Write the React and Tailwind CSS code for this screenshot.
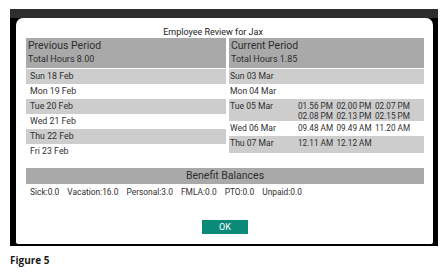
const prev = [
  { day: "Sun 18 Feb" },
  { day: "Mon 19 Feb" },
  { day: "Tue 20 Feb" },
  { day: "Wed 21 Feb" },
  { day: "Thu 22 Feb" },
  { day: "Fri 23 Feb" },
];

const curr = [
  { day: "Sun 03 Mar", times: [] },
  { day: "Mon 04 Mar", times: [] },
  { day: "Tue 05 Mar", times: ["01.56 PM", "02.00 PM", "02.07 PM", "02.08 PM", "02.13 PM", "02.15 PM"] },
  { day: "Wed 06 Mar", times: ["09.48 AM", "09.49 AM", "11.20 AM"] },
  { day: "Thu 07 Mar", times: ["12.11 AM", "12.12 AM"] },
];

const balances = ["Sick:0.0", "Vacation:16.0", "Personal:3.0", "FMLA:0.0", "PTO:0.0", "Unpaid:0.0"];

const PeriodHeader = ({ title, hours }) => (
  <div className="h-[30px] bg-[#a9a9a9] px-[2px] mb-px">
    <div className="text-[10.5px] leading-[14px] pt-[1px]">{title}</div>
    <div className="text-[9px] leading-[13px]">Total Hours {hours}</div>
  </div>
);

const App = () => {
  return (
    <div
      className="w-[448px] h-[272px] bg-white text-[#2f2f2f] pt-[9px] pl-[10px]"
      style={{ fontFamily: "Roboto, 'Liberation Sans', sans-serif" }}
    >
      {/* device frame */}
      <div className="w-[428px] h-[237px] flex flex-col bg-black">
        <div className="h-[9px] bg-[#2e2e2e]" />
        <div className="flex-1 pl-[6px] pr-[5px] pb-[2px] flex">
          <div className="flex-1 bg-white rounded-tl-[7px] rounded-tr-[7px] rounded-b-[2px] pt-[9px] pl-[10px] pr-[9px] flex flex-col">
            <div className="h-[11px] pr-[24px] text-[9px] leading-[11px] text-center text-[#222]">
              Employee Review for Jax
            </div>

            <div className="grid grid-cols-[200px_1fr] gap-[3px]">
              {/* previous period */}
              <div>
                <PeriodHeader title="Previous Period" hours="8.00" />
                {prev.map((r, i) => (
                  <div
                    key={r.day}
                    className={`h-[15px] pl-[4px] text-[8.8px] leading-[15px] ${i % 2 === 0 ? "bg-[#cdcdcd]" : ""}`}
                  >
                    {r.day}
                  </div>
                ))}
              </div>

              {/* current period */}
              <div>
                <PeriodHeader title="Current Period" hours="1.85" />
                {curr.map((r, i) => (
                  <div
                    key={r.day}
                    className={`flex pl-[1px] text-[8.6px] ${r.times.length > 3 ? "h-[22px] pt-[3px]" : i === 4 ? "h-[17px] pt-[3px]" : "h-[15px] pt-[3px]"} ${i % 2 === 0 ? "bg-[#cdcdcd]" : ""}`}
                  >
                    <div className="w-[68px] leading-[9px]">{r.day}</div>
                    <div className="grid grid-cols-[38.5px_38.5px_38.5px] leading-[9px] text-[8.2px]">
                      {r.times.map((t, j) => (
                        <div key={j}>{t}</div>
                      ))}
                    </div>
                  </div>
                ))}
              </div>
            </div>

            {/* benefit balances */}
            <div className="mt-[9px] h-[16px] bg-[#a9a9a9] text-center text-[10.5px] leading-[16px]">
              Benefit Balances
            </div>
            <div className="flex gap-[8px] pl-[4px] pt-[3px] text-[8.4px] leading-[11px]">
              {balances.map((b) => (
                <span key={b}>{b}</span>
              ))}
            </div>

            <div className="flex justify-center mt-[22px]">
              <button className="w-[46px] h-[14px] bg-[#0b8a78] text-white text-[9px] leading-[14px]">
                OK
              </button>
            </div>
          </div>
        </div>
      </div>

      <div
        className="mt-[8px] text-[10px] leading-[12px] font-bold text-[#1a1a1a]"
        style={{ fontFamily: "'Open Sans', 'Liberation Sans', sans-serif" }}
      >
        Figure 5
      </div>
    </div>
  );
};

export default App;
